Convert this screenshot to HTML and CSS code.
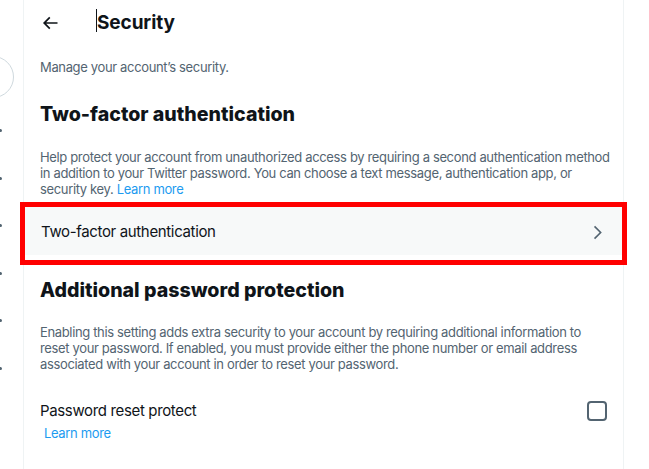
FILE: index.html
```html
<!DOCTYPE html>
<html>
<head>
<meta charset="utf-8">
<link rel="stylesheet" href="styles.css">
</head>
<body>
<div class="page">
  <nav class="side">
    <div class="avatar"></div>
    <div class="dots">
      <span class="dot"></span><span class="dot"></span><span class="dot"></span>
      <span class="dot"></span><span class="dot"></span><span class="dot"></span>
    </div>
  </nav>
  <main class="main">
    <header class="head">
      <span class="back">
        <svg width="20" height="20" viewBox="0 0 24 24"><path d="M7.414 13l5.043 5.04-1.414 1.42L3.586 12l7.457-7.46 1.414 1.42L7.414 11H21v2H7.414z" fill="#0f1419"/></svg>
      </span>
      <h1 class="title"><span class="caret"></span>Security</h1>
    </header>
    <p class="intro">Manage your account’s security.</p>
    <h2 class="sec">Two-factor authentication</h2>
    <p class="desc">Help protect your account from unauthorized access by requiring a second authentication method in addition to your Twitter password. You can choose a text message, authentication app, or security key. <a class="link">Learn more</a></p>
    <div class="row">
      <span class="row-label">Two-factor authentication</span>
      <svg class="chev" width="19" height="19" viewBox="0 0 24 24"><path d="M14.586 12L7.543 4.96l1.414-1.42L17.414 12l-8.457 8.46-1.414-1.42L14.586 12z" fill="#536471"/></svg>
      <span class="mark"></span>
    </div>
    <h2 class="sec sec2">Additional password protection</h2>
    <p class="desc desc2">Enabling this setting adds extra security to your account by requiring additional information to reset your password. If enabled, you must provide either the phone number or email address associated with your account in order to reset your password.</p>
    <div class="opt">
      <div class="opt-text">
        <div class="opt-label">Password reset protect</div>
        <a class="link small">Learn more</a>
      </div>
      <span class="box"></span>
    </div>
  </main>
  <div class="rest"></div>
</div>
</body>
</html>
```
FILE: styles.css
```css
html, body { margin: 0; padding: 0; background: #fff; }
body { font-family: Inter, "Noto Sans", "Liberation Sans", sans-serif; color: #0f1419; }
.page { display: flex; height: 469px; overflow: hidden; }
.side { width: 23px; border-right: 1px solid #eff3f4; position: relative; overflow: hidden; flex: none; }
.avatar { position: absolute; left: -28px; top: 56px; width: 40px; height: 40px; border: 1px solid #cfd9de; border-radius: 50%; }
.dots { display: flex; flex-direction: column; gap: 44.5px; padding-top: 129px; }
.dot { width: 3px; height: 3px; background: #536471; border-radius: 50%; margin-left: -1px; }
.main { width: 599px; border-right: 1px solid #eff3f4; flex: none; }
.rest { flex: 1; }
.head { display: flex; align-items: center; height: 45px; padding-left: 8px; }
.back { width: 36px; height: 36px; display: flex; align-items: center; justify-content: center; }
.title { margin: 0 0 0 29px; font-size: 19px; font-weight: 700; position: relative; line-height: 24px; letter-spacing: -0.1px; }
.caret { position: absolute; left: -1px; top: -2px; width: 1px; height: 23px; background: #0f1419; }
.intro { margin: 14px 0 0; padding: 0 16px; font-size: 13px; letter-spacing: -0.35px; color: #536471; line-height: 16px; }
.sec { margin: 27px 0 0; padding: 0 16px; font-size: 19.6px; font-weight: 800; line-height: 24px; }
.sec2 { margin-top: 23px; }
.desc { margin: 23px 0 0; padding: 0 8px 0 16px; font-size: 13px; letter-spacing: -0.35px; color: #536471; line-height: 16px; }
.desc2 { margin-top: 22px; padding-right: 16px; }
.link { color: #1d9bf0; }
.row { position: relative; margin-top: 10px; height: 48px; background: #f7f9f9; display: flex; align-items: center; justify-content: space-between; padding: 0 16px; margin-left: 1px; margin-right: 1px; }
.row-label { font-size: 15px; letter-spacing: -0.35px; }
.chev { margin-right: -1px; margin-top: 2px; }
.mark { position: absolute; left: -5px; top: -5px; right: -5px; bottom: -10px; border: 5px solid #ff0000; }
.opt { display: flex; justify-content: space-between; padding: 0 16px; margin-top: 29px; }
.opt-label { font-size: 15px; letter-spacing: -0.35px; line-height: 20px; }
.small { display: block; font-size: 13px; letter-spacing: -0.35px; margin-left: 4px; margin-top: 4px; line-height: 16px; }
.box { width: 16px; height: 16px; border: 2px solid #536471; border-radius: 4px; margin-top: 0; margin-right: 0; }
```
